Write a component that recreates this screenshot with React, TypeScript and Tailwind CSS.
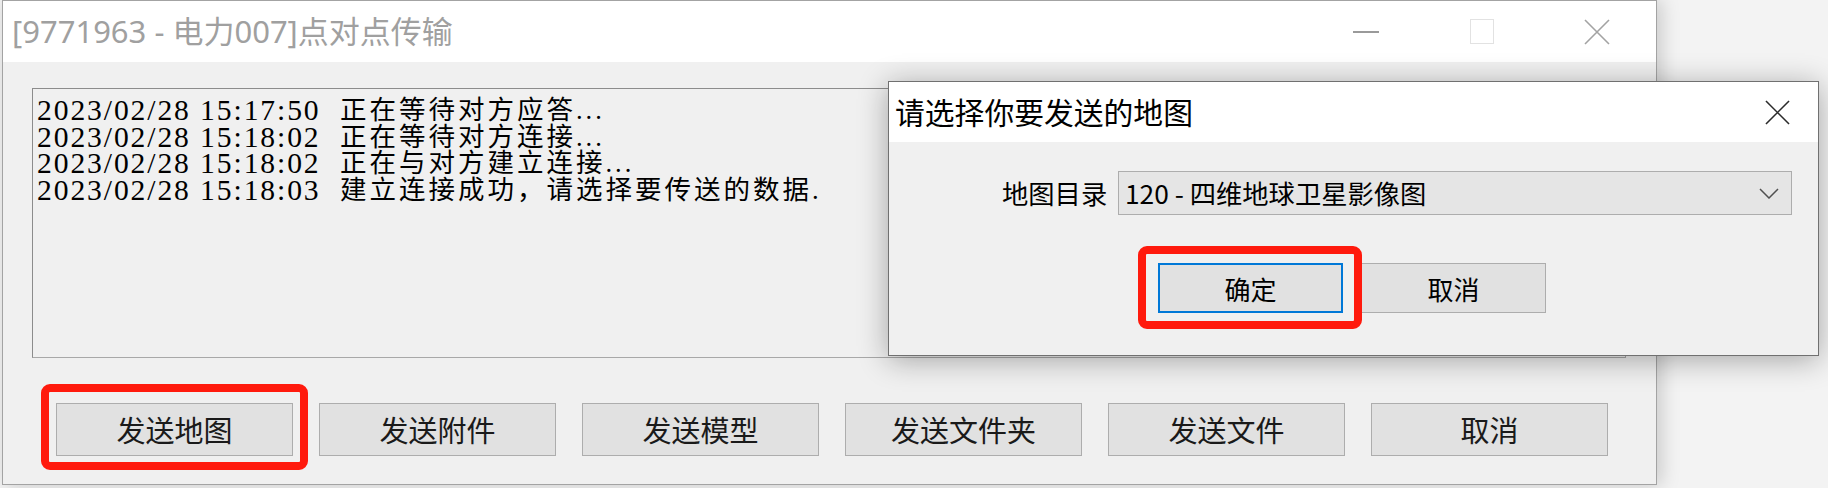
const logLines = [
  { time: "2023/02/28 15:17:50", msg: "正在等待对方应答..." },
  { time: "2023/02/28 15:18:02", msg: "正在等待对方连接..." },
  { time: "2023/02/28 15:18:02", msg: "正在与对方建立连接..." },
  { time: "2023/02/28 15:18:03", msg: "建立连接成功，请选择要传送的数据." },
];

const actions = ["发送地图", "发送附件", "发送模型", "发送文件夹", "发送文件", "取消"];

const cjk = "font-['Noto_Sans_CJK_SC',sans-serif]";

function RedMark({ className }: { className: string }) {
  return (
    <div
      className={`pointer-events-none absolute rounded-[9px] border-[8px] border-[#ff1a0d] ${className}`}
    />
  );
}

function CloseIcon({ color, size }: { color: string; size: number }) {
  return (
    <svg width={size} height={size} viewBox="0 0 26 26" fill="none">
      <path d="M1 1 L25 25 M25 1 L1 25" stroke={color} strokeWidth="1.6" />
    </svg>
  );
}

export default function App() {
  return (
    <div
      className={`relative w-[1828px] h-[488px] overflow-hidden bg-[#f3f3f3] ${cjk}`}
    >
      {/* main window */}
      <div className="absolute left-[2px] top-0 w-[1655px] h-[485px] flex flex-col border border-[#a3a3a3] bg-[#f0f0f0] shadow-[4px_0_18px_rgba(0,0,0,0.18)]">
        <div className="h-[61px] shrink-0 flex items-center bg-white">
          <span className="pl-[9px] text-[31px] leading-none text-[#a0a0a0] font-['Noto_Sans','Noto_Sans_CJK_SC',sans-serif]">
            [9771963 - 电力007]点对点传输
          </span>
          <div className="ml-auto flex h-full items-center">
            <div className="w-[116px] flex justify-center">
              <div className="w-[26px] h-[2px] bg-[#9a9a9a]" />
            </div>
            <div className="w-[116px] flex justify-center">
              <div className="w-[24px] h-[25px] border border-[#e2e2e2]" />
            </div>
            <div className="w-[116px] flex justify-center pr-[2px]">
              <CloseIcon color="#a3a3a3" size={26} />
            </div>
          </div>
        </div>

        <div className="flex-1 flex flex-col">
          <div className="mt-[26px] ml-[29px] mr-[30px] h-[270px] border border-[#8c8c8c] border-b-[#a8a8a8] border-r-[#a8a8a8] bg-[#f0f0f0] pl-[4px] pt-[8px] text-black">
            {logLines.map((l, i) => (
              <div
                key={i}
                className="h-[26.5px] flex items-center whitespace-nowrap leading-[26.5px]"
              >
                <span className="w-[303px] shrink-0 text-[29.6px] font-['Liberation_Serif',serif] tracking-[1.9px]">
                  {l.time}
                </span>
                <span className="text-[26.5px] tracking-[3px] font-['Liberation_Serif','Noto_Sans_CJK_SC',serif]">
                  {l.msg}
                </span>
              </div>
            ))}
          </div>

          <div className="mt-[45px] pl-[53px] flex gap-[26px]">
            {actions.map((a, i) => (
              <div key={a + i} className="relative">
                <div className="w-[237px] h-[53px] flex items-center justify-center border border-[#adadad] bg-[#e1e1e1] text-[29px] text-[#1a1a1a]">
                  {a}
                </div>
                {i === 0 && (
                  <RedMark className="-left-[15px] -right-[15px] -top-[19px] -bottom-[14px]" />
                )}
              </div>
            ))}
          </div>
        </div>
      </div>

      {/* dialog */}
      <div className="absolute left-[888px] top-[81px] w-[931px] h-[275px] flex flex-col border border-[#707070] bg-[#f0f0f0] shadow-[0_4px_28px_rgba(0,0,0,0.32)]">
        <div className="h-[60px] shrink-0 flex items-center bg-white">
          <span className="pl-[6px] text-[29.8px] leading-none text-black">
            请选择你要发送的地图
          </span>
          <div className="ml-auto pr-[28px] flex items-center">
            <CloseIcon color="#2b2b2b" size={25} />
          </div>
        </div>

        <div className="flex-1 flex flex-col">
          <div className="mt-[29px] flex items-center pl-[113px] pr-[26px] text-[26.3px] text-black">
            <span className="w-[116px] shrink-0 whitespace-nowrap">地图目录</span>
            <div className="flex-1 h-[44px] flex items-center border border-[#adadad] bg-[#e5e5e5] pl-[6px] pr-[12px]">
              <span className="whitespace-nowrap">120 - 四维地球卫星影像图</span>
              <svg className="ml-auto" width="20" height="11" viewBox="0 0 20 11" fill="none">
                <path d="M1 1 L10 10 L19 1" stroke="#505050" strokeWidth="1.5" />
              </svg>
            </div>
          </div>

          <div className="mt-[48px] pl-[269px] flex gap-[18px] text-[26px] text-black">
            <div className="relative">
              <div className="w-[185px] h-[50px] flex items-center justify-center border-2 border-[#0078d7] bg-[#e1e1e1]">
                确定
              </div>
              <RedMark className="-left-[20px] -right-[19px] -top-[17px] -bottom-[16px]" />
            </div>
            <div className="w-[185px] h-[50px] flex items-center justify-center border border-[#adadad] bg-[#e1e1e1]">
              取消
            </div>
          </div>
        </div>
      </div>
    </div>
  );
}
